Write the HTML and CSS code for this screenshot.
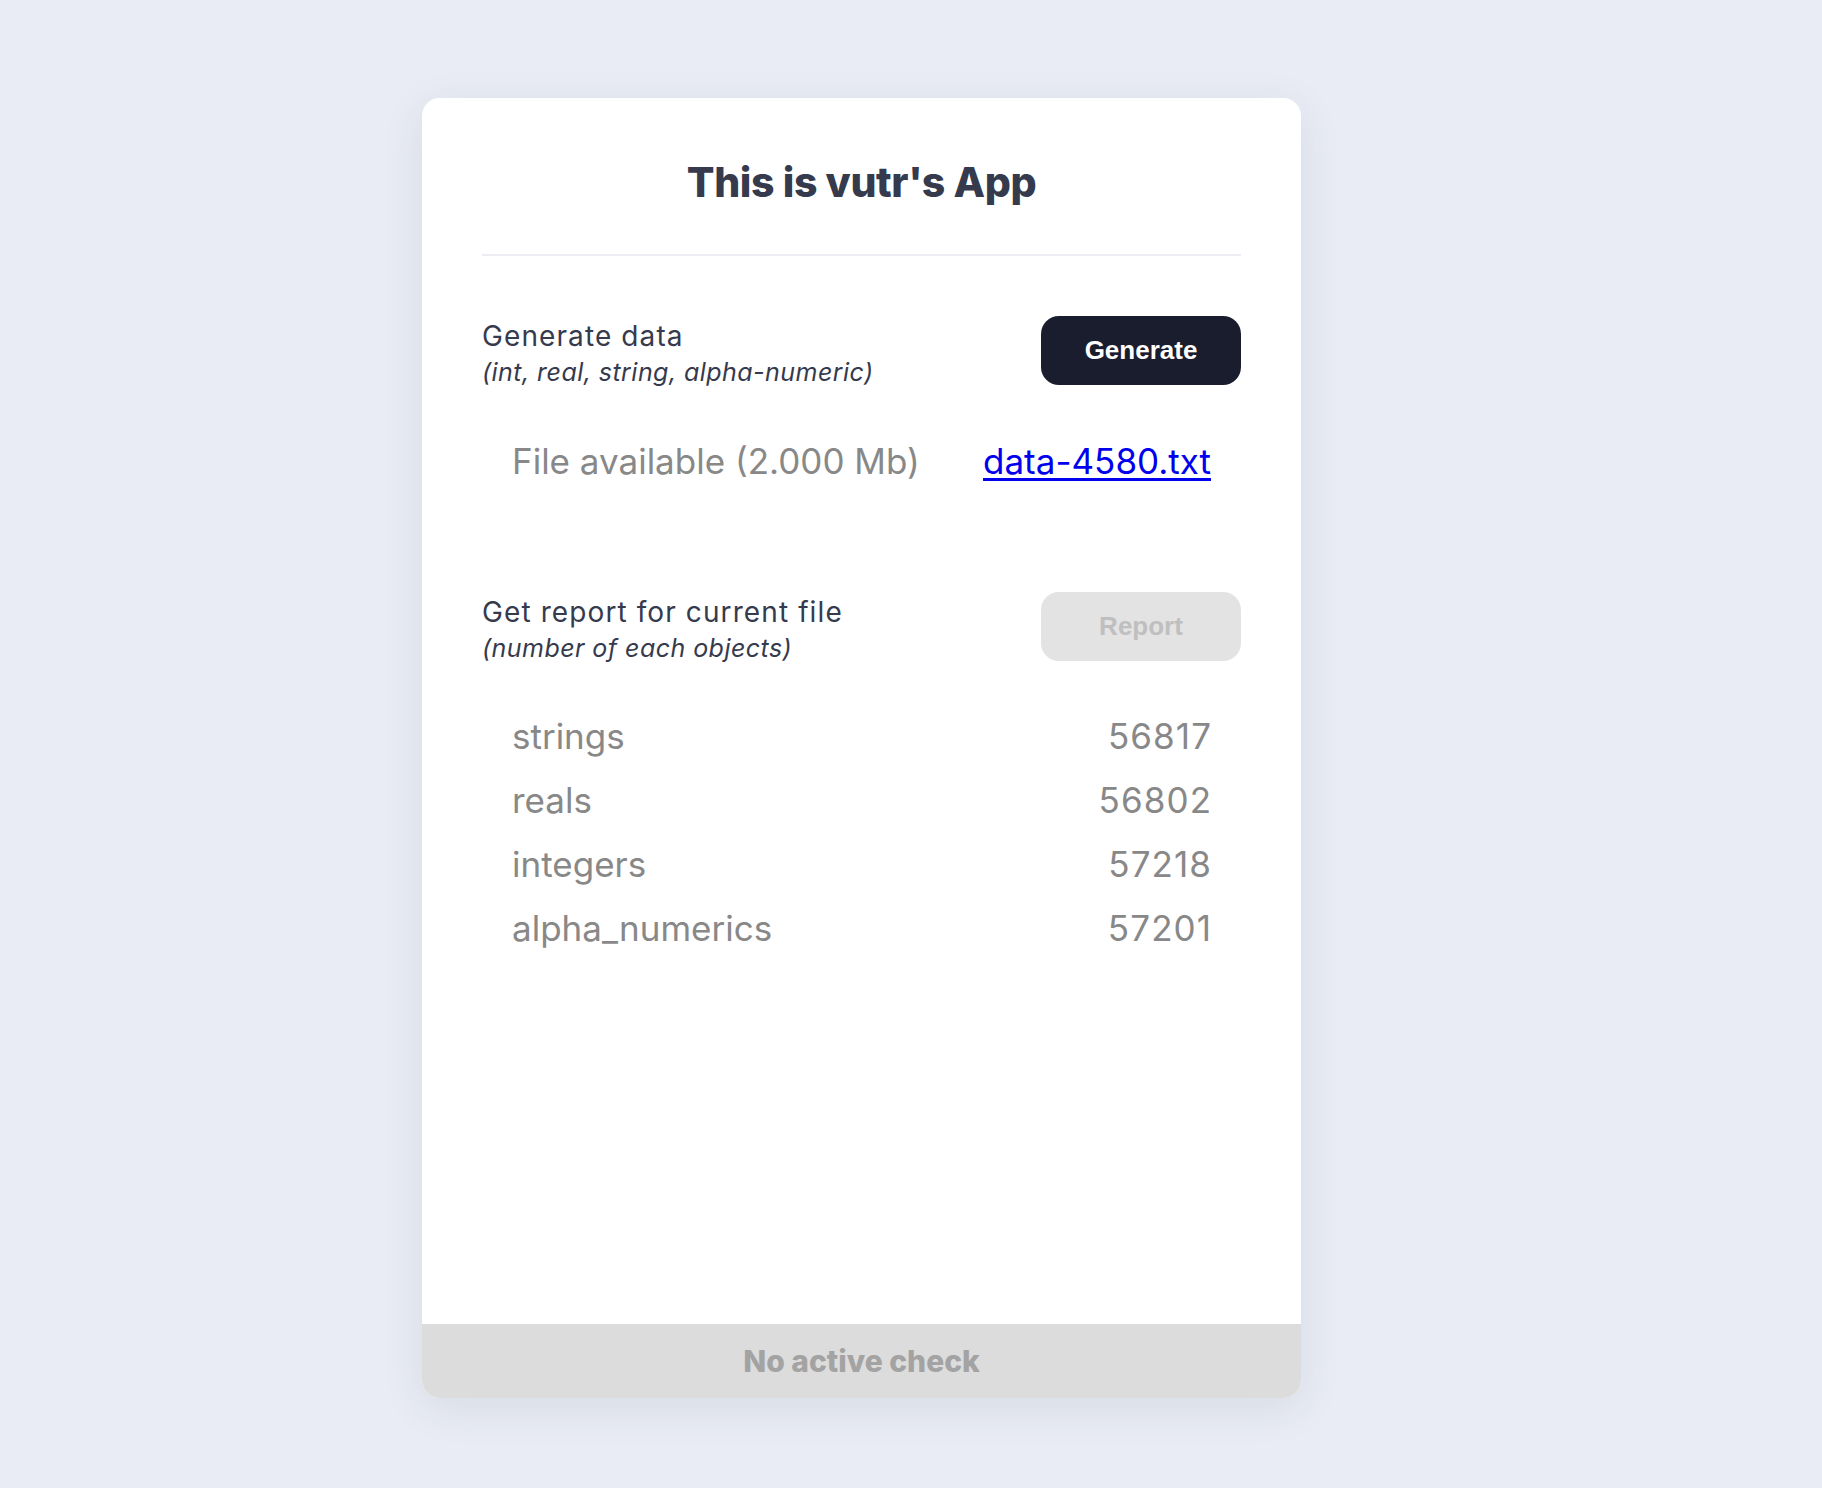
FILE: index.html
```html
<!DOCTYPE html>
<html lang="en">
<head>
<meta charset="utf-8">
<title>vutr's App</title>
<link rel="stylesheet" href="styles.css">
</head>
<body>
<main class="card">
  <div class="card-body">
    <h1 class="title">This is vutr's App</h1>
    <hr class="divider">
    <section class="action">
      <div class="action-text">
        <div class="action-label">Generate data</div>
        <div class="action-hint">(int, real, string, alpha-numeric)</div>
      </div>
      <button class="btn btn-dark">Generate</button>
    </section>
    <div class="row file-row">
      <span>File available (2.000 Mb)</span>
      <a href="#" class="file-link">data-4580.txt</a>
    </div>
    <section class="action action-report">
      <div class="action-text">
        <div class="action-label">Get report for current file</div>
        <div class="action-hint">(number of each objects)</div>
      </div>
      <button class="btn btn-disabled" disabled>Report</button>
    </section>
    <div class="stats">
      <div class="row"><span>strings</span><span class="num">56817</span></div>
      <div class="row"><span>reals</span><span class="num">56802</span></div>
      <div class="row"><span>integers</span><span class="num">57218</span></div>
      <div class="row"><span>alpha_numerics</span><span class="num">57201</span></div>
    </div>
  </div>
  <footer class="card-footer">No active check</footer>
</main>
</body>
</html>
```

FILE: styles.css
```css
html, body {
  margin: 0;
  padding: 0;
}
body {
  background: #e9ecf4;
  font-family: Inter, "Noto Sans", sans-serif;
  min-height: 1488px;
  padding-top: 98px;
  box-sizing: border-box;
}
.card {
  width: 879px;
  height: 1300px;
  margin-left: 422px;
  background: #ffffff;
  border-radius: 18px;
  box-shadow: 0 10px 44px rgba(40, 50, 80, 0.09);
  display: flex;
  flex-direction: column;
  overflow: hidden;
}
.card-body {
  padding: 0 60px;
  flex: 1;
}
.title {
  margin: 0;
  padding-top: 60px;
  text-align: center;
  font-size: 41px;
  line-height: 48px;
  font-weight: 800;
  letter-spacing: -0.4px;
  color: #363a4d;
}
.divider {
  border: 0;
  height: 2px;
  background: #eceef3;
  margin: 48px 0 0;
}
.action {
  display: flex;
  justify-content: space-between;
  align-items: flex-start;
  margin-top: 59px;
}
.action-text {
  padding-top: 3px;
}
.action-label {
  font-size: 28px;
  line-height: 36px;
  letter-spacing: 1.1px;
  color: #363a4d;
}
.action-hint {
  font-size: 25px;
  line-height: 36px;
  letter-spacing: 0.45px;
  font-style: italic;
  color: #363a4d;
}
.btn {
  width: 200px;
  height: 69px;
  margin-top: 1px;
  border: 0;
  border-radius: 18px;
  font-family: "Liberation Sans", Arial, sans-serif;
  font-weight: 700;
  font-size: 26px;
}
.btn-dark {
  background: #1a1d2e;
  color: #ffffff;
}
.btn-disabled {
  background: #e3e3e3;
  color: #bfbfbf;
}
.row {
  display: flex;
  justify-content: space-between;
  align-items: center;
  padding: 0 30px;
  font-size: 35px;
  line-height: 64px;
  color: #888888;
}
.num {
  letter-spacing: 1.1px;
  margin-right: -1.1px;
}
.file-row {
  margin-top: 39px;
}
.file-link {
  color: #0000ee;
  text-decoration: underline;
  text-underline-offset: 4px;
}
.action-report {
  margin-top: 98px;
}
.stats {
  margin-top: 38px;
}
.card-footer {
  height: 74px;
  background: #dcdcdc;
  color: #a3a3a3;
  font-weight: 800;
  font-size: 30px;
  display: flex;
  align-items: center;
  justify-content: center;
}
```
